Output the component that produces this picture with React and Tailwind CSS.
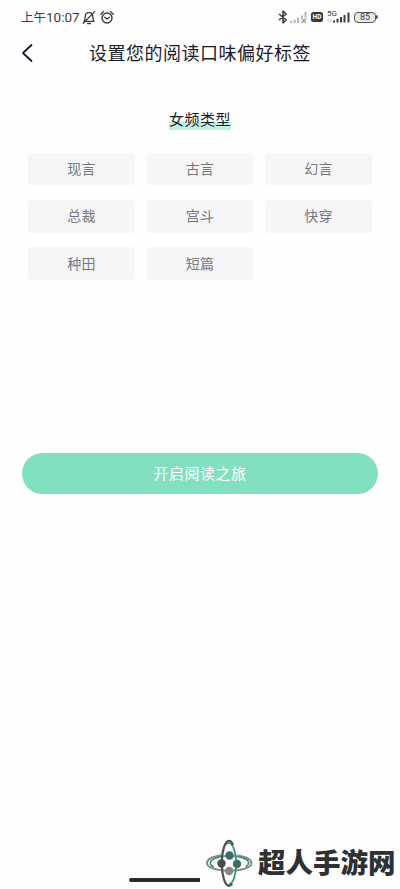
import { useState } from "react";

const tags = ["现言", "古言", "幻言", "总裁", "宫斗", "快穿", "种田", "短篇"];

const StatusBar = () => (
  <div className="flex h-[34px] items-center pl-[21px] pr-[22px] text-[#3c3c40]">
    <span className="w-[58px] whitespace-nowrap pt-[2px] text-[12.500px] leading-none">
      上午<span className="text-[13.500px]">10:07</span>
    </span>
    {/* muted bell */}
    <svg className="ml-[3px] shrink-0" width="14" height="15" viewBox="0 0 14 15" fill="none" stroke="currentColor" strokeWidth="1.3" strokeLinecap="round" strokeLinejoin="round">
      <path d="M2 11.400h10c-1-1-1.200-2-1.200-4.600C10.800 4.300 9.200 2.600 7 2.600S3.200 4.300 3.200 6.800C3.200 9.400 3 10.400 2 11.400z" />
      <path d="M5.500 13.500h3M12.600 1.600 1.300 13.200" />
    </svg>
    <svg className="ml-[4px] shrink-0" width="14" height="15" viewBox="0 0 14 15" fill="none" stroke="currentColor" strokeWidth="1.4" strokeLinecap="round" strokeLinejoin="round">
      <circle cx="7" cy="8" r="5" />
      <path d="M4.800 7.200 7 9l2.300-1.800M.8 4.200 3.300 1.800M13.200 4.200l-2.500-2.400" />
    </svg>
    <div className="ml-auto flex items-center">
      <svg className="shrink-0" width="10" height="14" viewBox="0 0 10 14" fill="none" stroke="currentColor" strokeWidth="1.600" strokeLinejoin="round">
        <path d="M1 4l7.200 6L5 12.800V1.200L8.200 4 1 10" />
      </svg>
      {/* sim without service */}
      <svg className="ml-[2px] mt-[2px] shrink-0" width="18" height="12" viewBox="0 0 18 12" fill="#b5b5b8">
        <path d="M0 9h2v2H0zM3.500 7.500h2V11h-2zM7 5.500h2V11H7zM11 3.500h2V6h-2zM14.500 0h2v5.500h-2z" />
        <path d="M11.500 6.500l4.600 4.500M16.100 6.500l-4.600 4.500" stroke="#a0a0a3" strokeWidth="1.500" />
      </svg>
      <span className="ml-[3px] flex h-[10px] w-[12px] items-center justify-center rounded-[2.500px] bg-[#38383b] text-[6.500px] font-bold leading-none text-white">HD</span>
      <svg className="ml-[4px] shrink-0" width="23" height="14" viewBox="0 0 23 14" fill="currentColor">
        <text x="0" y="6" fontSize="8" fontFamily="Roboto, sans-serif">5G</text>
        <path d="M1.800 9 .4 10.500l1.400 1.500M3.200 9l1.400 1.500L3.200 12" fill="none" stroke="#b5b5b8" strokeWidth=".8" />
        <path d="M6 10.500h2v2H6zM9.500 8.800h2v3.700h-2zM13 7h2v5.500h-2zM16.500 5h2v7.500h-2zM20.500 2.500h2v10h-2z" />
      </svg>
      <div className="ml-[4px] flex items-center">
        <span className="flex h-[11px] w-[22px] items-center justify-center rounded-[4px] border border-[#555558] bg-[#e7e7e9] pt-px text-[9px] leading-none">85</span>
        <span className="h-[4px] w-[2px] rounded-r-sm bg-[#555558]" />
      </div>
    </div>
  </div>
);

const SiteMark = () => (
  <div className="flex items-start">
    <svg className="shrink-0" width="48" height="48" viewBox="0 0 48 48" fill="none">
      {/* flat orbit */}
      <path d="M15 16.300C6.500 17.600 1 20.600 1 24.200c0 4.500 9.700 7.400 22 7.400s22.500-2.900 22.500-7.400c0-3.400-5.500-6.400-14-7.700" stroke="#858889" strokeWidth="1.900" />
      <path d="M8 28.300C5.500 27 4.300 25.500 4.300 24c0-4 8.700-7.200 19.200-7.200s19.200 3.200 19.200 7.200c0 1.500-1 2.800-3 4" stroke="#2f9277" strokeWidth="1.600" />
      {/* upright orbit */}
      <path d="M20 5.500c.8-1 1.700-1.500 2.700-1.500 4.200 0 7.500 9.500 7.500 20.500s-3 20.500-7.200 20.500" stroke="#2f9277" strokeWidth="1.700" />
      <path d="M27 6C26 3.200 24.500 1.800 23 1.800c-4 0-7.200 10.200-7.200 22.500S19 46.800 23 46.800c1.200 0 2.200-.8 3.200-2.200" stroke="#515153" strokeWidth="2.200" />
      <circle cx="23.500" cy="16.500" r="4.200" fill="#3b6c60" />
      <circle cx="15.500" cy="24.500" r="4.200" fill="#4a494c" />
      <circle cx="31" cy="25" r="4.200" fill="#3b6c60" />
      <circle cx="23.200" cy="32" r="4.200" fill="#858788" />
    </svg>
    <span className="ml-[4px] mt-[11px] whitespace-nowrap text-[27.500px] font-black leading-none text-[#2f3032]">超人手游网</span>
  </div>
);

const App = () => {
  const [selected, setSelected] = useState([]);

  const toggle = (tag) =>
    setSelected(selected.includes(tag) ? selected.filter((t) => t !== tag) : [...selected, tag]);

  return (
    <div className="flex h-[889px] w-[400px] flex-col overflow-hidden bg-[#fefefe] font-['Roboto','Noto_Sans_CJK_SC',sans-serif]">
      <StatusBar />

      <header className="grid h-[38px] grid-cols-[50px_1fr_50px] items-center text-[#1b1a2b]">
        <button className="pl-[21px]">
          <svg width="12" height="20" viewBox="0 0 12 20" fill="none" stroke="currentColor" strokeWidth="1.800" strokeLinecap="round" strokeLinejoin="round">
            <path d="M10.500 2 2 10l8.500 8" />
          </svg>
        </button>
        <h1 className="pt-[2px] text-center text-[18px] leading-none tracking-[0.500px] whitespace-nowrap">设置您的阅读口味偏好标签</h1>
      </header>

      <main className="flex flex-col px-[22px] pt-[38px]">
        <h2 className="mx-auto h-[20px] bg-[linear-gradient(to_bottom,transparent_62%,#bff0df_62%)] text-[15px] leading-[20px] tracking-[0.500px] text-[#1b1a2b]">女频类型</h2>

        <div className="mt-[22.500px] grid grid-cols-3 gap-x-[12px] gap-y-[14.700px] px-[6.200px]">
          {tags.map((tag) => (
            <button
              key={tag}
              onClick={() => toggle(tag)}
              className={
                selected.includes(tag)
                  ? "h-[32.700px] rounded bg-[#d9f5eb] pt-[0.500px] text-[14px] leading-none tracking-[0.300px] text-[#3fb890]"
                  : "h-[32.700px] rounded bg-[#f6f6f7] pt-[0.500px] text-[14px] leading-none tracking-[0.300px] text-[#777681]"
              }
            >
              {tag}
            </button>
          ))}
        </div>

        <button className="mt-[173px] h-[41px] rounded-full bg-[#82dfbf] pt-[2px] text-[15px] tracking-[0.500px] text-white">开启阅读之旅</button>
      </main>

      <footer className="mt-auto flex h-[50px] items-start">
        <div className="ml-[129px] mt-[39px] h-[4px] w-[71px] rounded-l-full bg-[#29292b]" />
        <div className="ml-[6px]">
          <SiteMark />
        </div>
      </footer>
    </div>
  );
};

export default App;
